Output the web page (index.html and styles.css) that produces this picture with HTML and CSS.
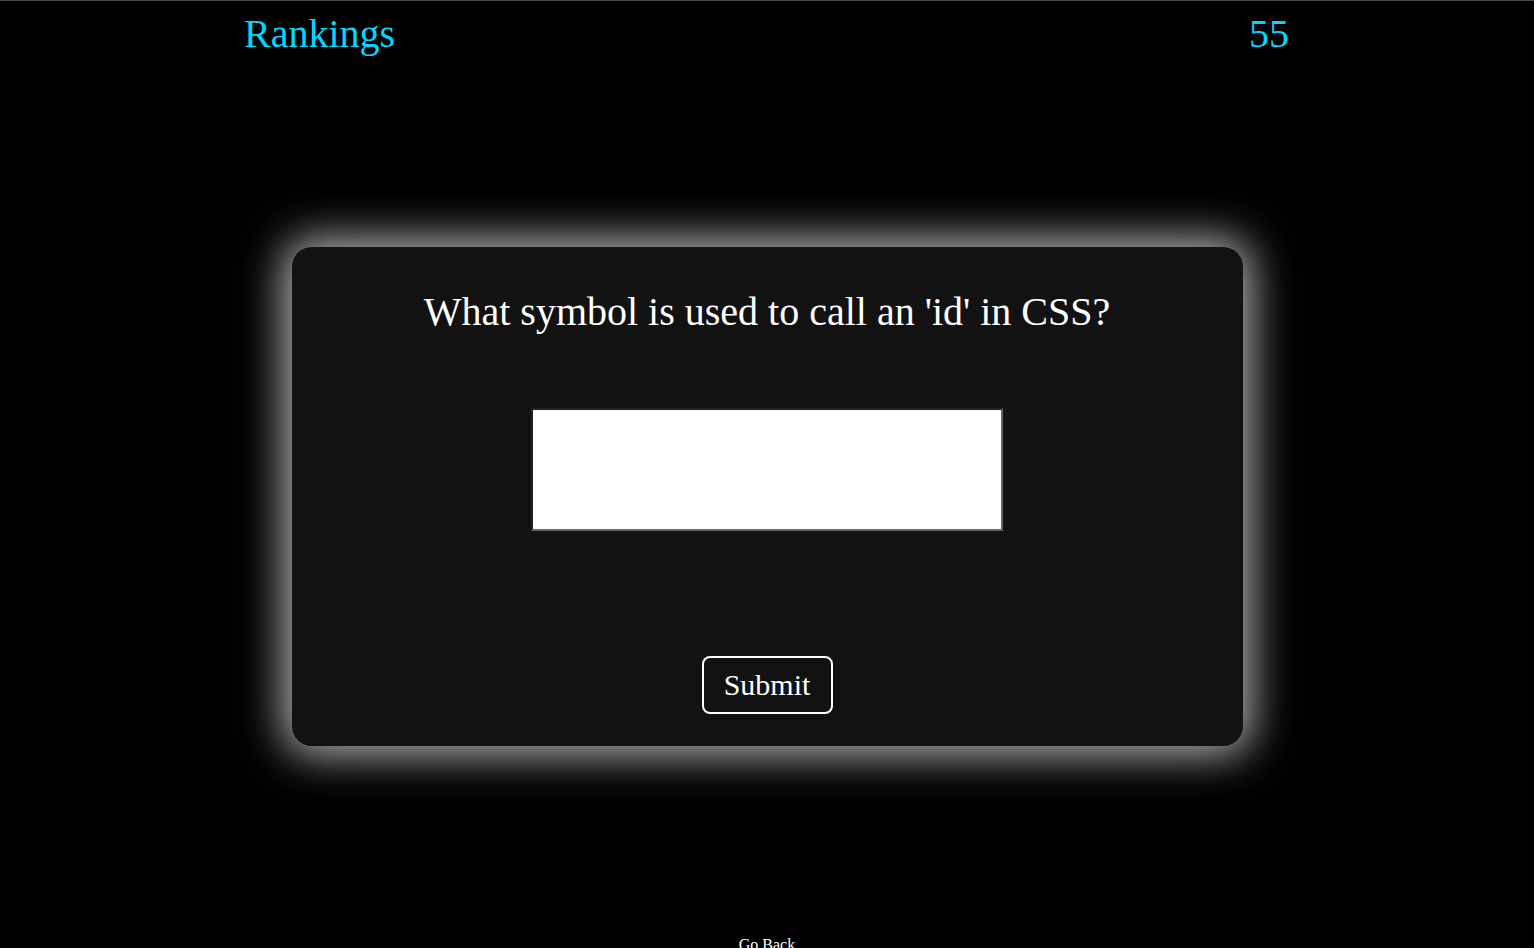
FILE: index.html
```html
<!DOCTYPE html>
<html>
<head>
<meta charset="utf-8">
<link rel="stylesheet" href="styles.css">
</head>
<body>
<header class="topbar">
  <span class="rank-link">Rankings</span>
  <span class="score">55</span>
</header>
<main class="stage">
  <section class="card">
    <h1 class="question">What symbol is used to call an 'id' in CSS?</h1>
    <input class="answer" type="text">
    <button class="submit">Submit</button>
  </section>
</main>
<div class="back">Go Back</div>
</body>
</html>
```
FILE: styles.css
```css
html, body {
  margin: 0;
  padding: 0;
  background: #000;
  height: 100%;
  overflow: hidden;
}
body {
  border-top: 1px solid #4a4a4a;
  font-family: "Liberation Serif", "Times New Roman", serif;
  color: #fff;
}
.topbar {
  display: flex;
  justify-content: space-between;
  padding: 10px 245px 0 244px;
  font-size: 40px;
  line-height: 46px;
  color: #00d8ff;
}
.stage {
  display: flex;
  justify-content: center;
  padding-top: 190px;
}
.card {
  box-sizing: border-box;
  width: 951px;
  height: 499px;
  background: #121212;
  border-radius: 20px;
  box-shadow: 0 0 44px 8px rgba(255,255,255,0.72);
  display: flex;
  flex-direction: column;
  align-items: center;
  padding-top: 42px;
}
.question {
  margin: 0;
  font-size: 40px;
  font-weight: normal;
  line-height: 46px;
}
.answer {
  box-sizing: border-box;
  width: 472px;
  height: 123px;
  margin-top: 73px;
  background: #fff;
  border-style: solid;
  border-width: 2px;
  border-color: #222 #666 #666 #222;
  outline: none;
}
.submit {
  box-sizing: border-box;
  margin-top: 125px;
  width: 131px;
  height: 58px;
  background: transparent;
  color: #fff;
  border: 2px solid #fff;
  border-radius: 8px;
  font-family: "Liberation Serif", "Times New Roman", serif;
  font-size: 30px;
  padding: 0;
}
.back {
  text-align: center;
  font-size: 16px;
  margin-top: 190px;
  line-height: 18px;
}
```
